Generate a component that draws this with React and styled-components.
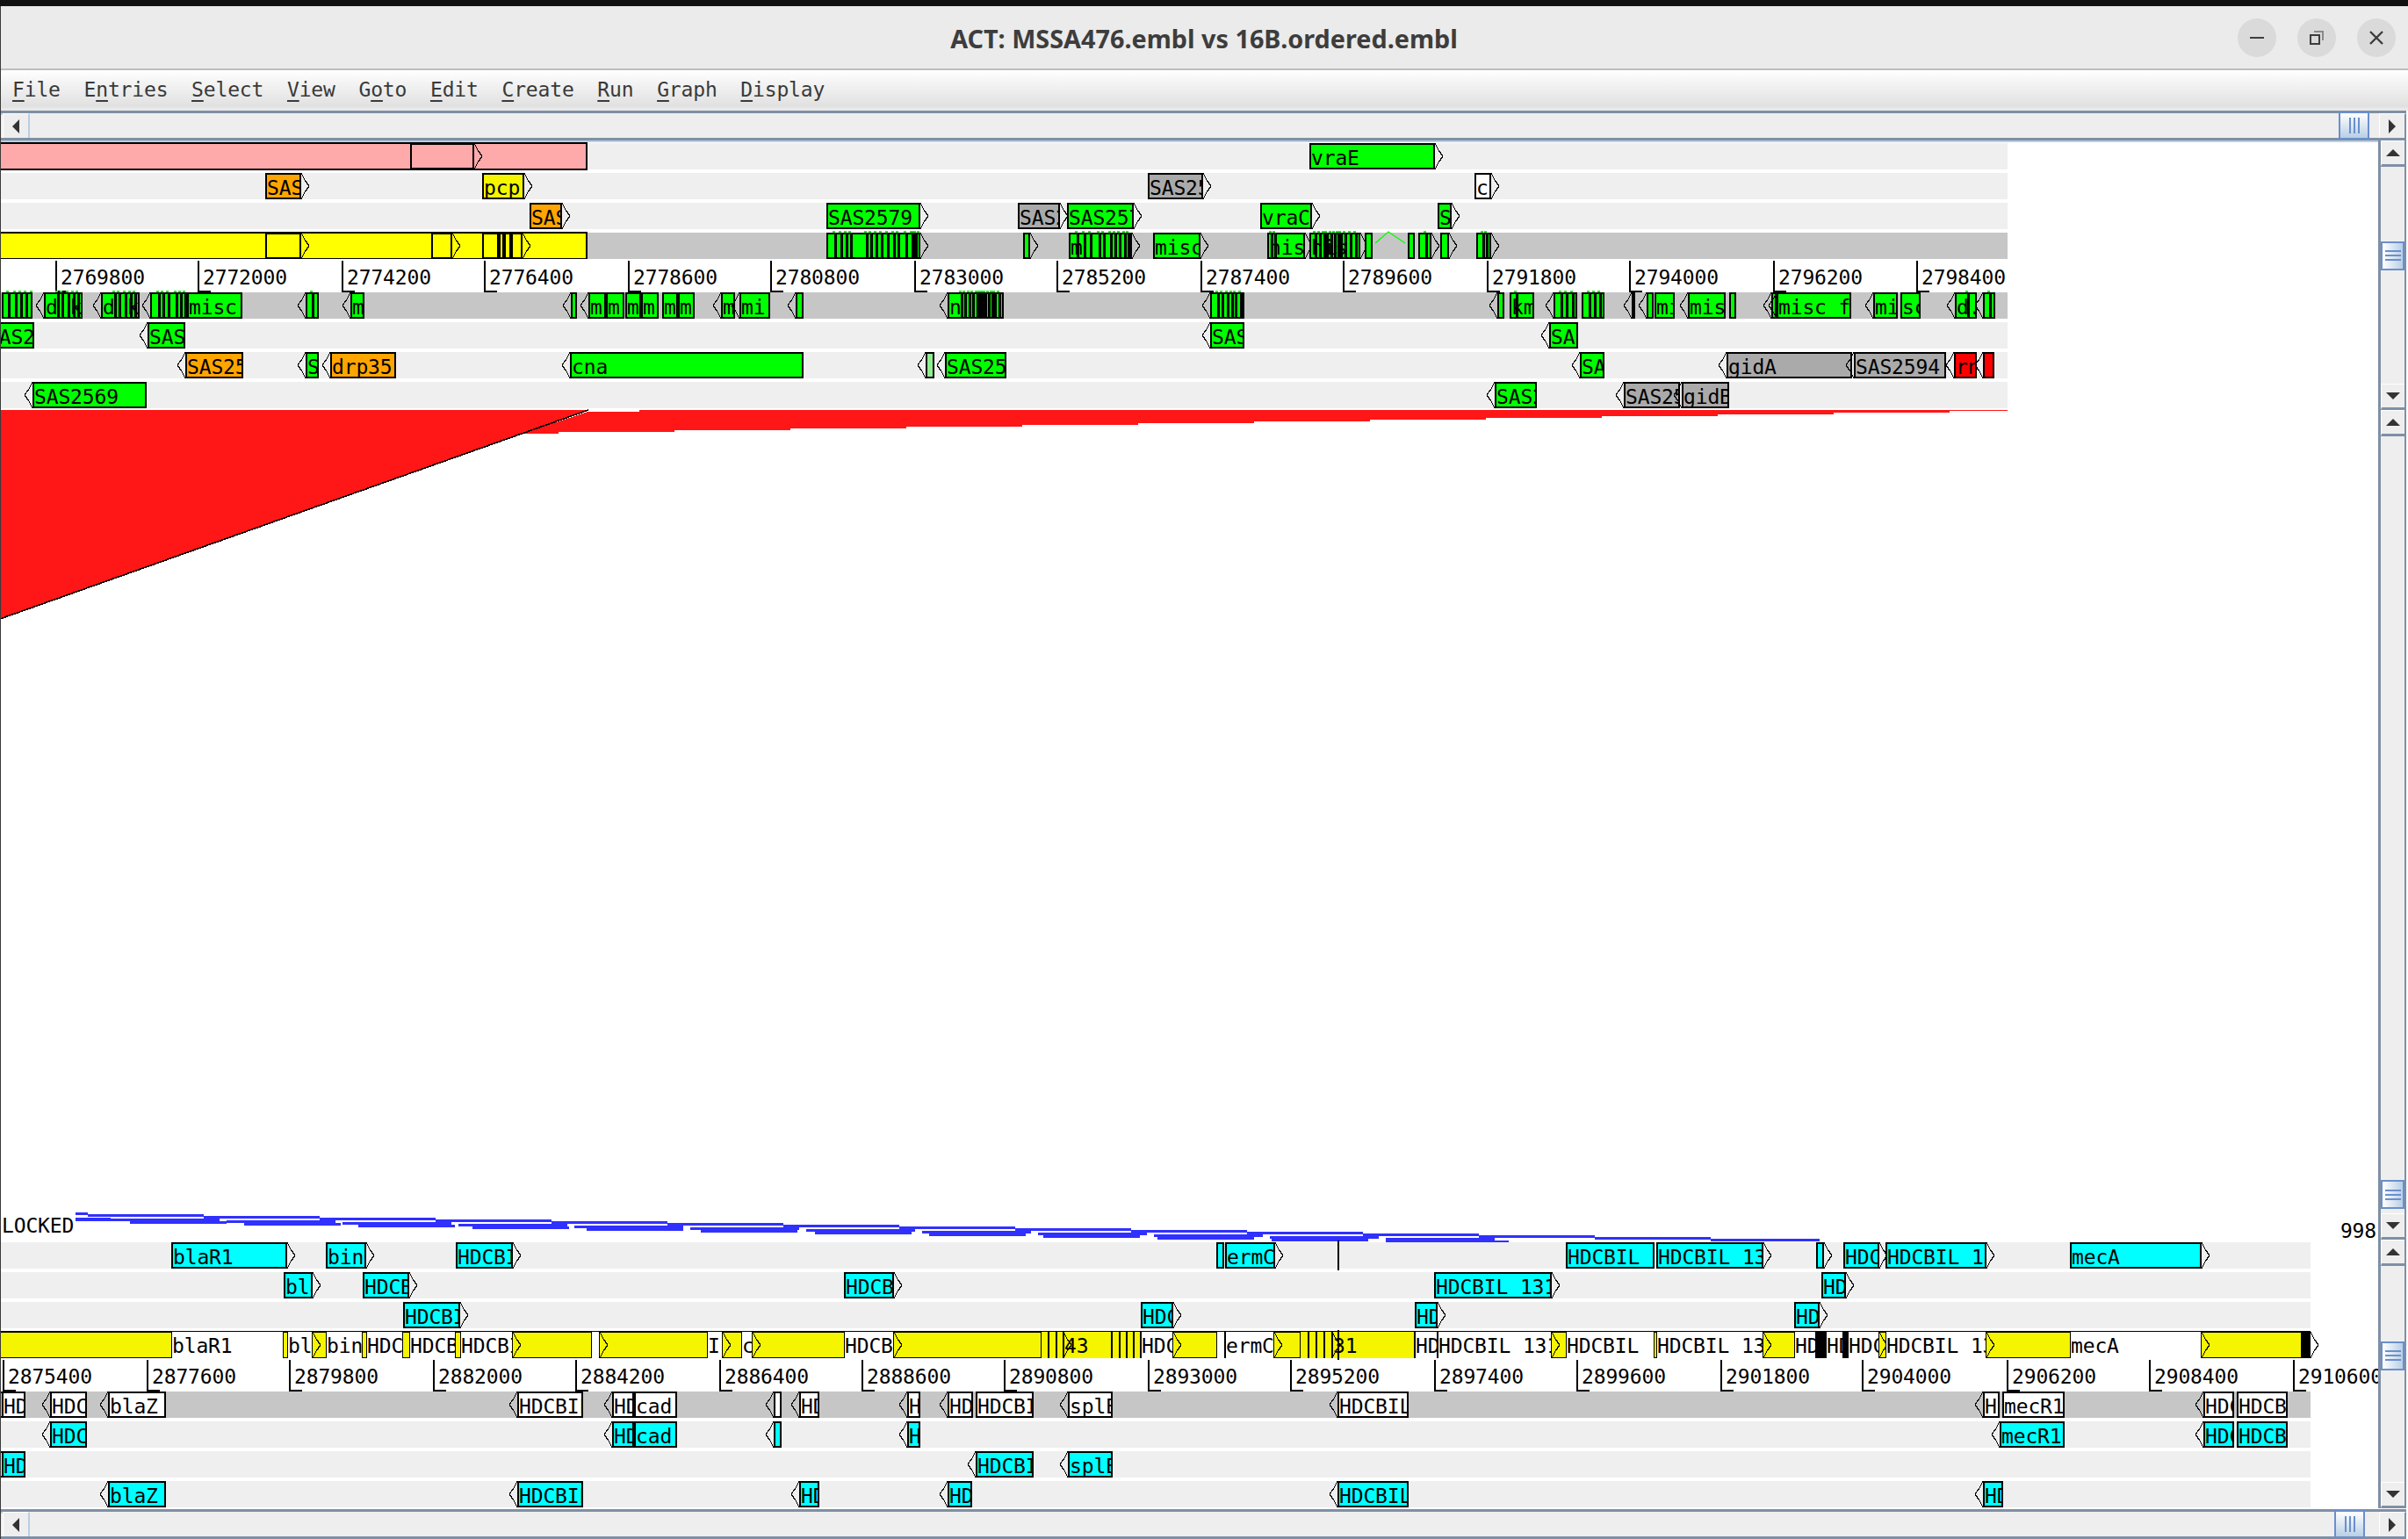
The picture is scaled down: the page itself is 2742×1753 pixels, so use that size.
import React from 'react';
import styled, { createGlobalStyle } from 'styled-components';

const MONO = `"DejaVu Sans Mono", "Liberation Mono", monospace`;

const GlobalStyle = createGlobalStyle`
  html, body { margin: 0; padding: 0; background: #fff; }
  #root { width: 2742px; height: 1753px; overflow: hidden; }
`;

const COLORS = {
  green: '#00ff00',
  lime: '#90ee90',
  orange: '#ffa500',
  grey: '#aaaaaa',
  red: '#ff0000',
  cyan: '#00ffff',
  white: '#ffffff',
  yellow: '#f5f500',
  brightYellow: '#ffff00',
  pink: '#ffaaaa',
  black: '#000000',
};

const TOP_SCALE = [
  [63, 2769800], [225, 2772000], [389, 2774200], [551, 2776400], [715, 2778600], [877, 2780800], [1041, 2783000],
  [1203, 2785200], [1367, 2787400], [1529, 2789600], [1693, 2791800], [1855, 2794000], [2019, 2796200], [2182, 2798400],
];

const BOTTOM_SCALE = [
  [3, 2875400], [167, 2877600], [329, 2879800], [493, 2882000], [655, 2884200], [819, 2886400], [981, 2888600],
  [1143, 2890800], [1307, 2893000], [1469, 2895200], [1633, 2897400], [1795, 2899600], [1959, 2901800], [2120, 2904000],
  [2285, 2906200], [2447, 2908400], [2611, 2910600],
];

// feature = [from, to, label, direction, colour, exon boundaries]
const TOP_BEFORE = [
  {
    band: [669, 'pink'],
    features: [[467, 540, '', 1, 'pink'], [1491, 1634, 'vraE', 1, 'green']],
  },
  {
    features: [
      [302, 343, 'SAS25', 1, 'orange'], [549, 597, 'pcp', 1, 'yellow'],
      [1307, 1370, 'SAS25', 1, 'grey'], [1679, 1698, 'c', 1, 'white'],
    ],
  },
  {
    features: [
      [603, 640, 'SAS25', 1, 'orange'], [941, 1048, 'SAS2579', 1, 'green'], [1159, 1207, 'SAS25', 1, 'grey'],
      [1215, 1291, 'SAS2579', 1, 'green'], [1435, 1494, 'vraC', 1, 'green'], [1637, 1653, 'S', 1, 'green'],
    ],
  },
  {
    dark: true,
    band: [669, 'brightYellow'],
    link: true,
    features: [
      [302, 343, '', 1, 'brightYellow'], [491, 515, '', 1, 'brightYellow'], [549, 568, '', 1, 'brightYellow'],
      [568, 574, '', 1, 'brightYellow'], [574, 582, '', 1, 'brightYellow'], [582, 595, '', 1, 'brightYellow'],
      [941, 1048, '', 1, 'green', [7, 14, 20, 25, 43, 48, 54, 60, 67, 74, 79, 88, 95, 97, 99, 103]],
      [1165, 1173, '', 1, 'green'],
      [1217, 1289, 'm', 1, 'green', [7, 15, 22, 32, 37, 45, 50, 55, 61, 65]],
      [1313, 1367, 'misc(', 1, 'green'],
      [1443, 1486, 'his', 1, 'green', [2, 6]],
      [1491, 1549, 'his', 1, 'green', [4, 9, 14, 17, 22, 26, 30, 33, 38, 44, 50]],
      [1554, 1563, '', 0, 'green'], [1603, 1611, '', 0, 'green'], [1615, 1630, '', 1, 'green', [6]],
      [1640, 1650, '', 1, 'green'], [1681, 1698, '', 1, 'green', [5, 9]],
    ],
  },
];

const TOP_AFTER = [
  {
    dark: true,
    features: [
      [2, 37, '', 0, 'green', [5, 13, 19, 25, 32]],
      [50, 94, 'd k', -1, 'green', [13, 18, 25, 31, 36]],
      [115, 159, 'd k', -1, 'green', [13, 18, 25, 31, 36]],
      [171, 213, '', -1, 'green', [7, 12, 18, 27, 32, 37]],
      [213, 276, 'misc', 0, 'green'],
      [348, 363, '', -1, 'green', [5]],
      [399, 415, 'm', -1, 'green'],
      [650, 657, '', -1, 'green'],
      [670, 690, 'm', -1, 'green'], [690, 711, 'm', 0, 'green'],
      [712, 730, 'm', 0, 'green'], [730, 750, 'm', 0, 'green'],
      [754, 772, 'm', 0, 'green'], [772, 791, 'm', 0, 'green'],
      [821, 837, 'm', -1, 'green'], [842, 877, 'mi', -1, 'green'],
      [906, 915, '', -1, 'green'],
      [1079, 1143, 'n', -1, 'green', [13, 17, 22, 26, 31, 34, 37, 40, 44, 48, 51, 56]],
      [1378, 1417, '', -1, 'green', [6, 11, 17, 22, 26, 32]],
      [1705, 1713, '', -1, 'green'],
      [1719, 1747, 'km', 0, 'green', [5]],
      [1769, 1796, '', -1, 'green', [6, 12, 19]],
      [1801, 1827, '', 0, 'green', [6, 12, 18]],
      [1858, 1861, '', -1, 'green'],
      [1875, 1883, '', -1, 'green'],
      [1884, 1907, 'misc', 0, 'green'],
      [1922, 1965, 'misc', -1, 'green'],
      [1969, 1977, '', 0, 'green'],
      [2017, 2023, '', -1, 'green'],
      [2023, 2108, 'misc f', -1, 'green'],
      [2133, 2161, 'misc', -1, 'green'],
      [2164, 2187, 'sc', 0, 'green'],
      [2226, 2251, 'd.', -1, 'green', [12]],
      [2258, 2272, '', -1, 'green', [5]],
    ],
  },
  {
    features: [
      [-17, 39, 'SAS2', 0, 'green'], [168, 211, 'SAS25', -1, 'green'],
      [1378, 1417, 'SAS25', -1, 'green'], [1764, 1797, 'SAS25', -1, 'green'],
    ],
  },
  {
    features: [
      [211, 277, 'SAS2579', -1, 'orange'], [348, 363, 'S', -1, 'green'], [376, 451, 'drp35', -1, 'orange'],
      [649, 915, 'cna', -1, 'green'], [1054, 1064, '', -1, 'lime'], [1076, 1146, 'SAS2579', -1, 'green'],
      [1799, 1827, 'SAS25', -1, 'green'], [1966, 2109, 'gidA', -1, 'grey'], [2111, 2216, 'SAS2594', -1, 'grey'],
      [2225, 2251, 'rn', -1, 'red'], [2258, 2271, '', -1, 'red'],
    ],
  },
  {
    features: [
      [37, 167, 'SAS2569', -1, 'green'], [1702, 1750, 'SAS25', -1, 'green'],
      [1849, 1913, 'SAS25', -1, 'grey'], [1915, 1969, 'gidB', -1, 'grey'],
    ],
  },
];

const BOTTOM_BEFORE = [
  {
    marker: 1523,
    features: [
      [195, 327, 'blaR1', 1, 'cyan'], [371, 417, 'bin', 1, 'cyan'], [519, 584, 'HDCBIL', 1, 'cyan'],
      [1385, 1394, '', 0, 'cyan'], [1395, 1452, 'ermC', 1, 'cyan'], [1783, 1884, 'HDCBIL', 0, 'cyan'],
      [1886, 2008, 'HDCBIL 131', 1, 'cyan'], [2068, 2077, '', 1, 'cyan'], [2099, 2140, 'HDCBIL', 1, 'cyan'],
      [2147, 2262, 'HDCBIL 131', 1, 'cyan'], [2357, 2507, 'mecA', 1, 'cyan'],
    ],
  },
  {
    features: [
      [323, 356, 'bla', 1, 'cyan'], [413, 466, 'HDCBIL', 1, 'cyan'], [961, 1018, 'HDCBIL', 1, 'cyan'],
      [1633, 1767, 'HDCBIL 131', 1, 'cyan'], [2074, 2102, 'HDC', 1, 'cyan'],
    ],
  },
  {
    features: [
      [459, 524, 'HDCBIL', 1, 'cyan'], [1299, 1336, 'HDCBIL', 1, 'cyan'], [1611, 1637, 'HDC', 1, 'cyan'],
      [2043, 2072, 'HDC', 1, 'cyan'],
    ],
  },
  {
    band: [2631, 'yellow'],
    thin: true,
    marker: 1523,
    features: [
      [195, 323, 'blaR1', 0, 'white'], [327, 356, 'bl', 1, 'white'], [371, 413, 'bin', 0, 'white'],
      [417, 459, 'HDCBIL', 0, 'white'], [466, 519, 'HDCBIL', 0, 'white'], [524, 584, 'HDCBIL', 1, 'white'],
      [673, 683, '', 1, 'white'], [805, 823, 'I', 1, 'white'], [844, 857, 'c', 1, 'white'],
      [961, 1018, 'HDCBIL', 1, 'white'],
      [1211, 1266, '43', 0, 'yellow'],
      [1185, 1194, '', 1, 'yellow'], [1194, 1203, '', 1, 'yellow'], [1203, 1211, '', 1, 'yellow'],
      [1266, 1275, '', 1, 'yellow'], [1275, 1283, '', 1, 'yellow'], [1283, 1291, '', 1, 'yellow'],
      [1291, 1299, '', 1, 'yellow'],
      [1299, 1336, 'HDCBIL', 1, 'white'], [1385, 1395, '', 0, 'white'], [1395, 1451, 'ermC', 1, 'white'],
      [1517, 1611, '31', 0, 'yellow'],
      [1480, 1490, '', 1, 'yellow'], [1490, 1499, '', 1, 'yellow'], [1499, 1508, '', 1, 'yellow'],
      [1508, 1517, '', 1, 'yellow'],
      [1611, 1637, 'HDC', 0, 'white'], [1637, 1767, 'HDCBIL 131', 1, 'white'],
      [1783, 1884, 'HDCBIL', 0, 'white'], [1886, 2008, 'HDCBIL 131', 1, 'white'], [2043, 2068, 'HDC', 0, 'white'],
      [2068, 2079, '', 1, 'black'], [2079, 2099, 'HDC', 0, 'white'], [2099, 2104, '', 0, 'black'],
      [2104, 2140, 'HDC', 1, 'white'], [2147, 2262, 'HDCBIL 131', 1, 'white'], [2357, 2507, 'mecA', 1, 'white'],
      [2620, 2631, '', 1, 'black'],
    ],
  },
];

const BOTTOM_AFTER = [
  {
    dark: true,
    features: [
      [2, 29, 'HDC', -1, 'white'], [57, 99, 'HDCBIL', -1, 'white'], [123, 189, 'blaZ', -1, 'white'],
      [589, 664, 'HDCBIL', -1, 'white'], [697, 722, 'HDC', -1, 'white'], [722, 771, 'cad', 0, 'white'],
      [881, 890, '', -1, 'white'], [910, 933, 'HDC', -1, 'white'], [1033, 1048, 'H', -1, 'white'],
      [1079, 1108, 'HDC', -1, 'white'], [1111, 1177, 'HDCBIL', 0, 'white'], [1216, 1267, 'splE', -1, 'white'],
      [1523, 1604, 'HDCBIL', -1, 'white'], [2258, 2277, 'H', -1, 'white'], [2280, 2351, 'mecR1', 0, 'white'],
      [2509, 2544, 'HDC', -1, 'white'], [2547, 2605, 'HDCBIL', 0, 'white'],
    ],
  },
  {
    features: [
      [57, 99, 'HDCBIL', -1, 'cyan'], [697, 722, 'HDC', -1, 'cyan'], [722, 771, 'cad', 0, 'cyan'],
      [881, 890, '', -1, 'cyan'], [1033, 1048, 'H', -1, 'cyan'], [2277, 2351, 'mecR1', -1, 'cyan'],
      [2509, 2544, 'HDC', -1, 'cyan'], [2547, 2605, 'HDCBIL', 0, 'cyan'],
    ],
  },
  {
    features: [
      [2, 29, 'HDC', -1, 'cyan'], [1111, 1177, 'HDCBIL', -1, 'cyan'], [1216, 1267, 'splE', -1, 'cyan'],
    ],
  },
  {
    features: [
      [123, 189, 'blaZ', -1, 'cyan'], [589, 664, 'HDCBIL', -1, 'cyan'], [910, 933, 'HDC', -1, 'cyan'],
      [1079, 1107, 'HDC', -1, 'cyan'], [1523, 1604, 'HDCBIL', -1, 'cyan'], [2258, 2281, 'HDC', -1, 'cyan'],
    ],
  },
];

const MENU = [
  ['', 'F', 'ile'], ['E', 'n', 'tries'], ['', 'S', 'elect'], ['', 'V', 'iew'], ['G', 'o', 'to'],
  ['', 'E', 'dit'], ['', 'C', 'reate'], ['', 'R', 'un'], ['', 'G', 'raph'], ['', 'D', 'isplay'],
];

// y offsets of the comparison panel, it starts at 465 on the page
const PANEL_TOP = 465;

const redSliver = () => {
  const pts = ['593,494', '670,469', '728,469', '728,467', '2286,467', '2286,468'];
  let y = 468;
  for (let x = 2220; x > 593; x -= 132) {
    pts.push(`${x},${y}`);
    y += 2;
    pts.push(`${x},${y}`);
  }
  pts.push(`593,${y}`);
  return pts.map((p) => {
    const [a, b] = p.split(',');
    return `${a},${b - PANEL_TOP}`;
  }).join(' ');
};

const blueRects = () => {
  const rects = [[86, 1381, 14, 3], [86, 1387, 40, 4]];
  for (let i = 0; i < 15; i++) rects.push([100 + 132 * i, 1383 + 2 * i, i === 14 ? 124 : 132, 3]);
  for (let i = 0; i < 12; i++) rects.push([126 + 132 * i, 1388 + 2 * i, 124, 3]);
  for (let i = 0; i < 12; i++) rects.push([148 + 130 * i, 1391 + 2 * i, i === 11 ? 140 : 110, 3]);
  return rects;
};

const barGradient = (offsets, size, color) => {
  const stops = offsets.flatMap((o) => [
    `transparent ${o}px`, `${color} ${o}px`, `${color} ${o + size}px`, `transparent ${o + size}px`,
  ]);
  return `linear-gradient(to right, ${stops.join(', ')})`;
};

const Window = styled.div`
  position: relative;
  width: 2742px;
  height: 1753px;
  display: flex;
  flex-direction: column;
  overflow: hidden;
  background: #fff;
  font-family: ${MONO};

  &::before {
    content: '';
    position: absolute;
    left: 0;
    top: 7px;
    bottom: 0;
    width: 1px;
    background: #3a3a3a;
    z-index: 5;
  }
`;

const TitleBar = styled.div`
  box-sizing: border-box;
  height: 81px;
  padding-top: 1px;
  border-top: 7px solid #111;
  border-bottom: 2px solid #bdbdbd;
  background: #ebebeb;
  display: grid;
  grid-template-columns: 1fr auto 1fr;
  align-items: center;
`;

const Title = styled.div`
  grid-column: 2;
  font-family: "Noto Sans", "Open Sans", sans-serif;
  font-weight: 700;
  font-size: 28.8px;
  color: #3d3d3d;
`;

const Controls = styled.div`
  grid-column: 3;
  justify-self: end;
  display: flex;
  gap: 24px;
  padding-right: 14px;
`;

const ControlButton = styled.div`
  width: 44px;
  height: 44px;
  border-radius: 50%;
  background: #dadada;
  display: flex;
  align-items: center;
  justify-content: center;
`;

const MenuBar = styled.div`
  box-sizing: border-box;
  height: 46px;
  padding: 0 0 2px 14px;
  display: flex;
  align-items: center;
  gap: 26.7px;
  background: linear-gradient(to bottom, #ffffff 0%, #f4f4f4 30%, #e0e0e0 92%, #e9e9e9 93%);
  font-size: 23px;
  letter-spacing: -0.15px;
  color: #3a3a3a;

  u { text-underline-offset: 4px; text-decoration-thickness: 2px; }
`;

const HBar = styled.div`
  box-sizing: border-box;
  height: 34px;
  flex: none;
  display: flex;
  margin-right: 2px;
  border-top: 3px solid #7f8fa5;
  border-bottom: 3px solid #7f8fa5;
  box-shadow: 0 2px 0 #b8cfe5, inset 0 2px 0 #b8cfe5;
  background: #eeeeee;
`;

const BarButton = styled.div`
  box-sizing: border-box;
  flex: none;
  background: #eeeeee;
  display: flex;
  align-items: center;
  justify-content: center;
  border-top: 1px solid #fff;
  border-left: 1px solid #fff;
`;

const HButton = styled(BarButton)`
  width: 31px;
  margin-left: ${(p) => (p.$end ? '0' : '3px')};
  border-right: 2px solid ${(p) => (p.$end ? '#7f8fa5' : '#b8cfe5')};
`;

const VButton = styled(BarButton)`
  height: 30px;
  border-bottom: 3px solid #7f8fa5;
`;

const Arrow = styled.span`
  width: 0;
  height: 0;
  border-style: solid;
  border-color: transparent;
  ${(p) => p.$dir === 'left' && 'border-width: 8px 8px 8px 0; border-right-color: #333;'}
  ${(p) => p.$dir === 'right' && 'border-width: 8px 0 8px 8px; border-left-color: #333;'}
  ${(p) => p.$dir === 'up' && 'border-width: 0 8px 8px 8px; border-bottom-color: #333;'}
  ${(p) => p.$dir === 'down' && 'border-width: 8px 8px 0 8px; border-top-color: #333;'}
`;

const Spacer = styled.div`
  flex: ${(p) => p.$grow} 1 0;
  min-width: 0;
  min-height: 0;
  background: #eeeeee;
`;

const HThumb = styled.div`
  box-sizing: border-box;
  flex: none;
  width: 35px;
  margin: -2px 0;
  border: 2px solid #6b8fcc;
  background: linear-gradient(to bottom, #ffffff, #b8cfe5);
  display: flex;
  justify-content: center;
  align-items: center;
  gap: 3px;
`;

const VThumb = styled.div`
  box-sizing: border-box;
  flex: none;
  height: 33px;
  border: 2px solid #6b8fcc;
  background: linear-gradient(to right, #ffffff, #b8cfe5);
  display: flex;
  flex-direction: column;
  justify-content: center;
  align-items: center;
  gap: 3px;
`;

const HGrip = styled.span`
  width: 2px;
  height: 18px;
  background: #6b8fcc;
`;

const VGrip = styled.span`
  width: 18px;
  height: 2px;
  background: #6b8fcc;
`;

const Main = styled.div`
  flex: none;
  height: 1559px;
  display: flex;
`;

const Content = styled.div`
  flex: none;
  width: 2708px;
  display: flex;
  flex-direction: column;
  overflow: hidden;
`;

const SideColumn = styled.div`
  flex: none;
  width: 34px;
  display: flex;
  flex-direction: column;
`;

const VBar = styled.div`
  box-sizing: border-box;
  flex: none;
  height: ${(p) => p.$height}px;
  width: 32px;
  display: flex;
  flex-direction: column;
  border-left: 3px solid #7f8fa5;
  border-right: 2px solid #7f8fa5;
  background: #eeeeee;
`;

const GenomeView = styled.div`
  flex: none;
  padding-top: ${(p) => p.$top}px;
  width: ${(p) => p.$width}px;
`;

const TrackStack = styled.div`
  display: flex;
  flex-direction: column;
  gap: 4px;
`;

const Track = styled.div`
  position: relative;
  height: 30px;
  background: ${(p) => (p.$dark ? '#c6c6c6' : '#efefef')};
`;

const Band = styled.div`
  box-sizing: border-box;
  position: absolute;
  left: 0;
  top: -1px;
  height: 32px;
  border: 2px solid #000;
  border-left: 0;
  background: ${(p) => COLORS[p.$color]};
`;

const FeatureBox = styled.div`
  position: absolute;
  top: 0;
  height: 30px;
`;

const FeatureLabel = styled.div`
  box-sizing: border-box;
  height: 30px;
  overflow: hidden;
  white-space: pre;
  font-size: 23px;
  line-height: ${(p) => (p.$thin ? '32px' : '30px')};
  letter-spacing: -0.15px;
  color: #000;
  border: solid #000;
  border-width: ${(p) => (p.$thin ? '0 1px' : '2px')};
  background-color: ${(p) => COLORS[p.$color]};
`;

const Chevron = styled.svg`
  position: absolute;
  top: 0;
  ${(p) => (p.$dir > 0 ? 'left: 100%;' : 'right: 100%;')}
  display: block;
  overflow: visible;
`;

const ExonTicks = styled.div`
  position: absolute;
  left: 0;
  right: 0;
  top: -2px;
  height: 2px;
`;

const Marker = styled.div`
  position: absolute;
  top: -2px;
  height: 34px;
  width: 2px;
  background: #000;
  z-index: 2;
`;

const LinkLine = styled.svg`
  position: absolute;
  left: 1566px;
  top: -1px;
  overflow: visible;
`;

const Scale = styled.div`
  position: relative;
  height: 38px;
  background: #fff;
`;

const ScaleTick = styled.div`
  position: absolute;
  top: 2px;
  height: 36px;
  border-left: 2px solid #000;
  padding-left: 4px;
  font-size: 23px;
  line-height: 38px;
  letter-spacing: -0.15px;
  color: #000;
  white-space: pre;

  &::after {
    content: '';
    position: absolute;
    left: -2px;
    bottom: 0;
    width: 15px;
    height: 2px;
    background: #000;
  }
`;

const Comparison = styled.div`
  position: relative;
  flex: none;
  height: ${(p) => p.$height}px;
  width: 2708px;
  background: #fff;
`;

const ComparisonDrawing = styled.svg`
  position: absolute;
  inset: 0;
  display: block;
`;

const CornerText = styled.div`
  position: absolute;
  font-size: 23px;
  letter-spacing: -0.15px;
  line-height: 26px;
  color: #000;
  ${(p) => (p.$right ? 'right: 2px; bottom: 0;' : 'left: 2px; bottom: 6px;')}
`;

const Feature = ({ from, to, label, dir, color, exons, thin }) => {
  const style = { left: from, width: to - from };
  return (
    <FeatureBox style={style}>
      <FeatureLabel
        $thin={thin}
        $color={color}
        style={exons ? { backgroundImage: barGradient(exons, 3, '#000') } : undefined}
      >
        {label}
      </FeatureLabel>
      {exons && <ExonTicks style={{ backgroundImage: barGradient(exons, 3, '#00ff00') }} />}
      {dir !== 0 && (
        <Chevron $dir={dir} width="10" height="30" viewBox="0 0 10 30" shapeRendering="crispEdges">
          <polyline
            points={dir > 0 ? '0,0 4,8 9,15 4,22 0,30' : '10,0 6,8 1,15 6,22 10,30'}
            fill="none"
            stroke="#000"
            strokeWidth="1.2"
          />
        </Chevron>
      )}
    </FeatureBox>
  );
};

const TrackRow = ({ track }) => (
  <Track $dark={track.dark}>
    {track.band && <Band $color={track.band[1]} style={{ width: track.band[0] }} />}
    {track.features.map(([from, to, label, dir, color, exons], i) => (
      <Feature key={i} from={from} to={to} label={label} dir={dir} color={color} exons={exons} thin={track.thin} />
    ))}
    {track.link && (
      <LinkLine width="36" height="14" viewBox="0 0 36 14">
        <polyline points="0,13 15,0 34,13" fill="none" stroke="#00ff00" strokeWidth="1.2" />
      </LinkLine>
    )}
    {track.marker && <Marker style={{ left: track.marker }} />}
  </Track>
);

const ScaleRow = ({ ticks }) => (
  <Scale>
    {ticks.map(([x, value]) => (
      <ScaleTick key={value} style={{ left: x }}>{value}</ScaleTick>
    ))}
  </Scale>
);

const Genome = ({ before, scale, after, width, top }) => (
  <GenomeView $width={width} $top={top}>
    <TrackStack>
      {before.map((t, i) => <TrackRow key={i} track={t} />)}
    </TrackStack>
    <ScaleRow ticks={scale} />
    <TrackStack>
      {after.map((t, i) => <TrackRow key={i} track={t} />)}
    </TrackStack>
  </GenomeView>
);

const HScroll = ({ before, after }) => (
  <HBar>
    <HButton><Arrow $dir="left" /></HButton>
    <Spacer $grow={before} />
    <HThumb><HGrip /><HGrip /><HGrip /></HThumb>
    <Spacer $grow={after} />
    <HButton $end><Arrow $dir="right" /></HButton>
  </HBar>
);

const VScroll = ({ height, before, after }) => (
  <VBar $height={height}>
    <VButton><Arrow $dir="up" /></VButton>
    <Spacer $grow={before} />
    <VThumb><VGrip /><VGrip /><VGrip /></VThumb>
    <Spacer $grow={after} />
    <VButton><Arrow $dir="down" /></VButton>
  </VBar>
);

export default function App() {
  return (
    <Window>
      <GlobalStyle />
      <TitleBar>
        <Title>ACT: MSSA476.embl vs 16B.ordered.embl</Title>
        <Controls>
          <ControlButton>
            <svg width="16" height="16" viewBox="0 0 16 16"><rect x="0" y="7" width="16" height="2" fill="#3d3d3d" /></svg>
          </ControlButton>
          <ControlButton>
            <svg width="16" height="16" viewBox="0 0 16 16">
              <path d="M5 0h11v11h-2V2H5z" fill="#8a8a8a" />
              <rect x="1" y="5" width="10" height="10" fill="none" stroke="#3d3d3d" strokeWidth="2" />
            </svg>
          </ControlButton>
          <ControlButton>
            <svg width="16" height="16" viewBox="0 0 16 16">
              <path d="M1 1l14 14M15 1L1 15" stroke="#3d3d3d" strokeWidth="2.4" />
            </svg>
          </ControlButton>
        </Controls>
      </TitleBar>
      <MenuBar>
        {MENU.map(([pre, key, post]) => (
          <span key={pre + key + post}>{pre}<u>{key}</u>{post}</span>
        ))}
      </MenuBar>
      <HScroll before={2630} after={11} />
      <Main>
        <Content>
          <Genome before={TOP_BEFORE} scale={TOP_SCALE} after={TOP_AFTER} width={2286} top={3} />
          <Comparison $height={950}>
            <ComparisonDrawing width="2708" height="950" viewBox="0 0 2708 950" shapeRendering="crispEdges">
              <polygon points={redSliver()} fill="#ff1616" />
              <polygon points="0,2 670,2 0,240" fill="#ff1616" />
              <line x1="0" y1="240" x2="670" y2="2" stroke="#000" strokeWidth="1.6" />
              {blueRects().map(([x, y, w, h], i) => (
                <rect key={i} x={x} y={y - PANEL_TOP} width={w} height={h} fill="#3030ff" />
              ))}
            </ComparisonDrawing>
            <CornerText>LOCKED</CornerText>
            <CornerText $right>998</CornerText>
          </Comparison>
          <Genome before={BOTTOM_BEFORE} scale={BOTTOM_SCALE} after={BOTTOM_AFTER} width={2631} top={0} />
        </Content>
        <SideColumn>
          <VScroll height={307} before={82} after={125} />
          <VScroll height={945} before={846} after={5} />
          <VScroll height={306} before={84} after={125} />
        </SideColumn>
      </Main>
      <HScroll before={2625} after={16} />
    </Window>
  );
}
